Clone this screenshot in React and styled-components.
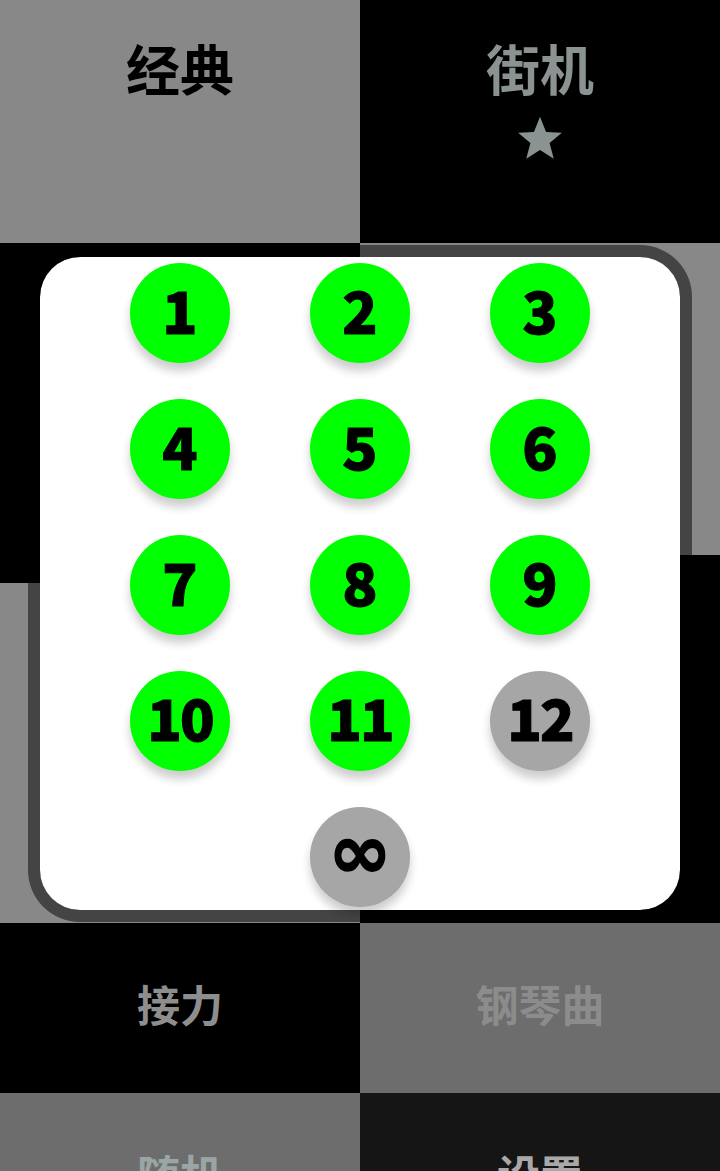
import React from "react";
import styled, { createGlobalStyle } from "styled-components";

const GlobalStyle = createGlobalStyle`
  html, body {
    margin: 0;
    padding: 0;
    background: #000;
  }
  body {
    font-family: "Noto Sans CJK SC", "Noto Sans", sans-serif;
  }
`;

const Page = styled.div`
  position: relative;
  width: 720px;
  height: 1171px;
  overflow: hidden;
  display: flex;
  flex-direction: column;
`;

const TileRow = styled.div`
  display: flex;
  flex: 0 0 ${(p) => p.$h}px;
  height: ${(p) => p.$h}px;
`;

const Column = styled.div`
  flex: 1;
  display: flex;
  flex-direction: column;
`;

const Tile = styled.div`
  flex: ${(p) => (p.$h ? `0 0 ${p.$h}px` : "1")};
  background: ${(p) => p.$bg};
  color: ${(p) => p.$fg || "#8c8c8c"};
  display: flex;
  flex-direction: column;
  align-items: center;
  justify-content: ${(p) => (p.$top ? "flex-start" : "center")};
  padding-top: ${(p) => (p.$top ? "33px" : "0")};
  padding-bottom: ${(p) => (p.$top ? "0" : "8px")};
  box-sizing: border-box;
`;

const Label = styled.div`
  font-family: "Noto Sans CJK SC", sans-serif;
  font-weight: 700;
  font-size: ${(p) => p.$size}px;
  line-height: 1.3;
  letter-spacing: 0;
`;

const StarIcon = styled.svg`
  width: 50px;
  height: 50px;
  margin-top: 10px;
  fill: currentColor;
`;

const ModalFrame = styled.div`
  position: absolute;
  left: 28px;
  top: 245px;
  width: 664px;
  height: 677px;
  box-sizing: border-box;
  border: 12px solid rgba(0, 0, 0, 0.5);
  border-radius: 52px;
  background: #fff;
  background-clip: padding-box;
  padding: 6px 0 4px;
`;

const LevelGrid = styled.div`
  display: grid;
  grid-template-columns: repeat(3, 180px);
  grid-auto-rows: 100px;
  row-gap: 36px;
  justify-content: center;
  justify-items: center;
`;

const LevelButton = styled.div`
  width: 100px;
  height: 100px;
  border-radius: 50%;
  background: ${(p) => (p.$open ? "#00ff00" : "#a6a6a6")};
  box-shadow: 0 8px 10px rgba(0, 0, 0, 0.2);
  display: flex;
  align-items: center;
  justify-content: center;
  color: #000;
  font-family: "Noto Sans CJK SC", sans-serif;
  font-weight: 900;
  font-size: ${(p) => (p.$wide ? 57 : 58)}px;
  line-height: 1;
  letter-spacing: ${(p) => (p.$wide ? "-2px" : "0")};
  grid-column: ${(p) => p.$col || "auto"};
`;

const Digits = styled.span`
  margin-top: -9px;
  -webkit-text-stroke: 1px #000;
`;

const Infinity = styled.span`
  font-family: "DejaVu Sans", sans-serif;
  font-weight: 700;
  font-size: 76px;
  line-height: 1;
  margin-top: -10px;
  -webkit-text-stroke: 1.5px #000;
`;

const levels = [1, 2, 3, 4, 5, 6, 7, 8, 9, 10, 11, 12];

export default function App() {
  return (
    <>
      <GlobalStyle />
      <Page>
        <TileRow $h={243}>
          <Tile $bg="#888888" $fg="#000" $top>
            <Label $size={54}>经典</Label>
          </Tile>
          <Tile $bg="#000" $fg="#8b9292" $top>
            <Label $size={54}>街机</Label>
            <StarIcon viewBox="0 0 24 24">
              <path d="M12 1.8l2.9 7.3 7.6.4-5.9 4.9 2 7.6L12 17.7 5.4 22l2-7.6L1.5 9.5l7.6-.4z" />
            </StarIcon>
          </Tile>
        </TileRow>
        <TileRow $h={680}>
          <Column>
            <Tile $bg="#000" $h={340} />
            <Tile $bg="#888888" $h={340} />
          </Column>
          <Column>
            <Tile $bg="#888888" $h={312} />
            <Tile $bg="#000" $h={368} />
          </Column>
        </TileRow>
        <TileRow $h={170}>
          <Tile $bg="#000" $fg="#8e8e8e">
            <Label $size={43}>接力</Label>
          </Tile>
          <Tile $bg="#6d6d6d" $fg="#8c8c8c">
            <Label $size={43}>钢琴曲</Label>
          </Tile>
        </TileRow>
        <TileRow $h={170}>
          <Tile $bg="#6d6d6d" $fg="#9aa6a6">
            <Label $size={43}>随机</Label>
          </Tile>
          <Tile $bg="#151515" $fg="#a8a8a8">
            <Label $size={43}>设置</Label>
          </Tile>
        </TileRow>

        <ModalFrame>
          <LevelGrid>
            {levels.map((n) => (
              <LevelButton key={n} $open={n < 12} $wide={n >= 10}>
                <Digits>{n}</Digits>
              </LevelButton>
            ))}
            <LevelButton $col={2}>
              <Infinity>∞</Infinity>
            </LevelButton>
          </LevelGrid>
        </ModalFrame>
      </Page>
    </>
  );
}
